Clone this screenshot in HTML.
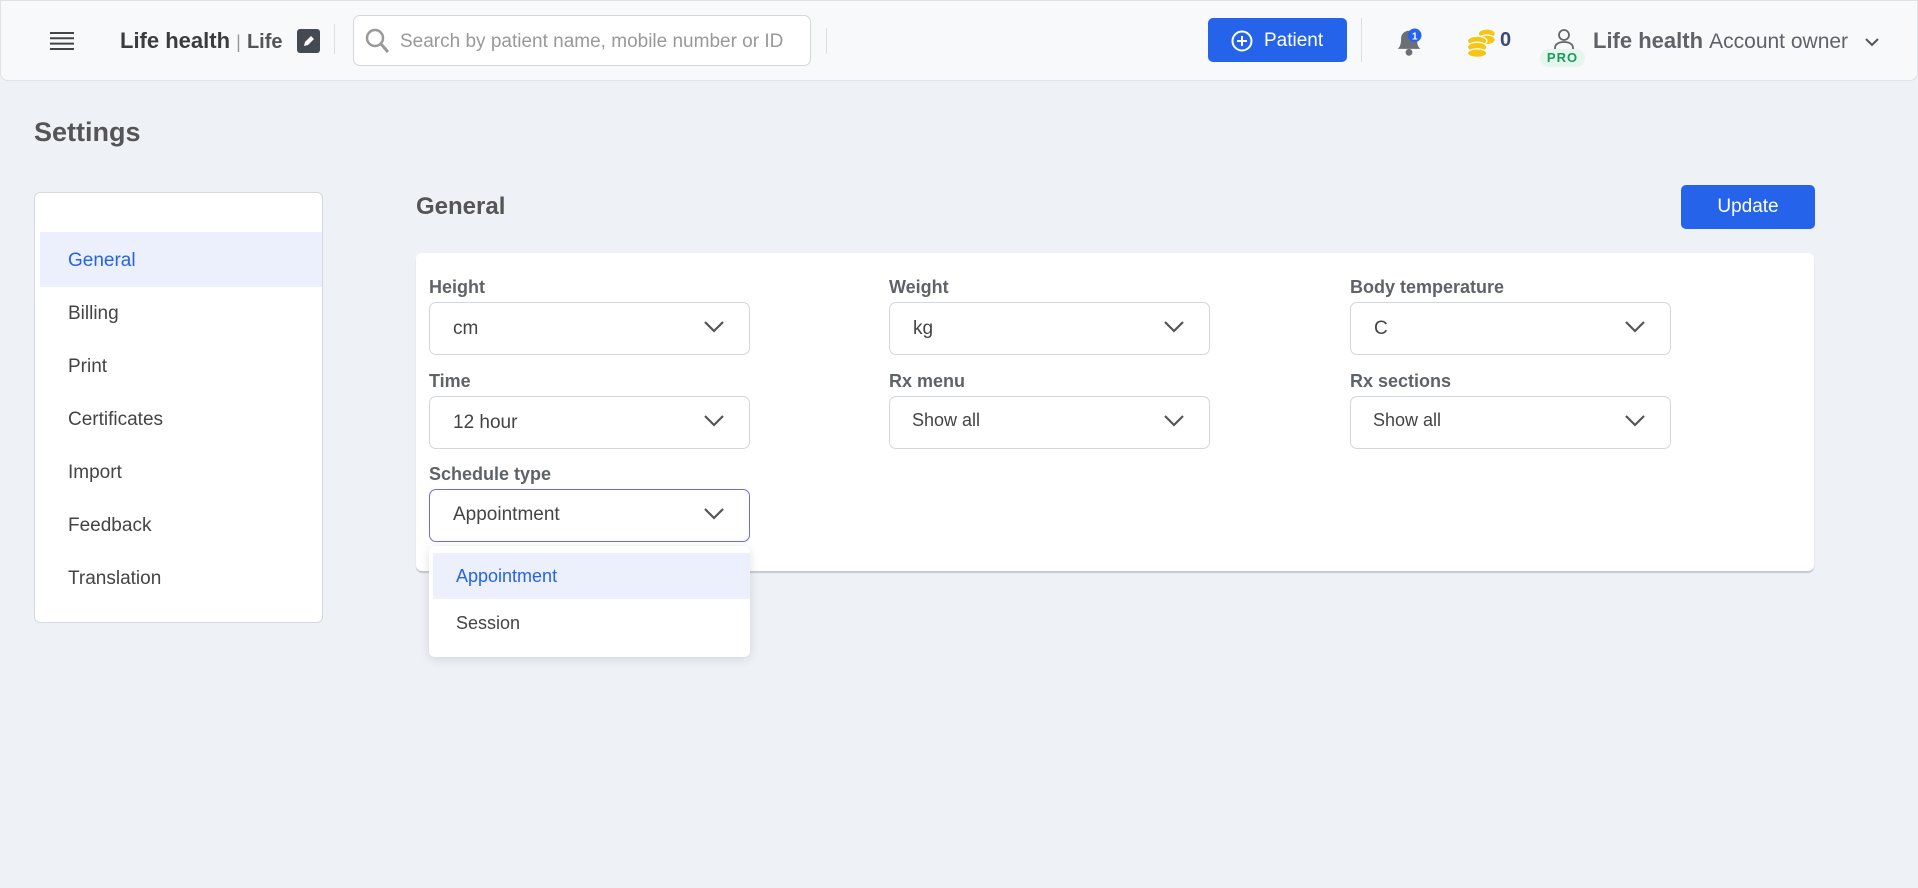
<!DOCTYPE html>
<html><head><meta charset="utf-8"><style>
*{box-sizing:border-box;margin:0;padding:0}
body{width:1918px;height:888px;background:#eef1f6;font-family:"Liberation Sans",Arial,sans-serif;position:relative;overflow:hidden;color:#444}
.abs{position:absolute}
.hdr{left:0;top:0;width:1918px;height:81px;background:#f8f9fb;border:1px solid #dfe2e7;border-radius:0 0 8px 8px}
.sel{position:absolute;width:321px;height:53px;background:#fff;border:1px solid #d3d6db;border-radius:7px;font-size:19px;color:#444;padding-left:23px;line-height:51px}
.sel svg{position:absolute;right:24px;top:17px}
.lbl{position:absolute;font-size:18px;font-weight:bold;color:#5f6368}
.nav{position:absolute;left:68px;font-size:19px;color:#444}
</style></head><body>
<div class="abs hdr"></div>
<svg class="abs" style="left:50px;top:31px" width="24" height="20" viewBox="0 0 24 20"><g stroke="#444" stroke-width="2"><line x1="0" y1="2" x2="24" y2="2"/><line x1="0" y1="7.3" x2="24" y2="7.3"/><line x1="0" y1="12.6" x2="24" y2="12.6"/><line x1="0" y1="18" x2="24" y2="18"/></g></svg>
<div class="abs" style="left:120px;top:28px;font-size:22px;font-weight:bold;color:#3c3c3c">Life health <span style="font-weight:normal;color:#999;font-size:18px">|</span> <span style="font-size:20px;color:#555">Life</span></div>
<div class="abs" style="left:297px;top:29px;width:23px;height:24px;background:#444a52;border-radius:3px"><svg width="23" height="24" viewBox="0 0 23 24"><path d="M7 17l1-4 6-6 3 3-6 6z" fill="#fff"/></svg></div>
<div class="abs" style="left:334px;top:24px;width:1px;height:30px;background:#dcdfe3"></div>
<div class="abs" style="left:353px;top:15px;width:458px;height:51px;background:#fff;border:1px solid #d3d6db;border-radius:7px"></div>
<svg class="abs" style="left:365px;top:28px" width="26" height="28" viewBox="0 0 26 28"><circle cx="10" cy="10" r="8" fill="none" stroke="#999" stroke-width="2.5"/><line x1="16" y1="16" x2="23" y2="24" stroke="#999" stroke-width="3"/></svg>
<div class="abs" style="left:400px;top:31px;font-size:19px;color:#999">Search by patient name, mobile number or ID</div>
<div class="abs" style="left:826px;top:28px;width:1px;height:26px;background:#dcdfe3"></div>
<div class="abs" style="left:1208px;top:18px;width:139px;height:44px;background:#2563eb;border-radius:5px;color:#fff;font-size:19px;line-height:46px;padding-left:56px">Patient</div>
<svg class="abs" style="left:1231px;top:30px" width="22" height="22" viewBox="0 0 22 22"><circle cx="11" cy="11" r="9.5" fill="none" stroke="#fff" stroke-width="2"/><path d="M11 6v10M6 11h10" stroke="#fff" stroke-width="2"/></svg>
<div class="abs" style="left:1361px;top:18px;width:1px;height:44px;background:#dcdfe3"></div>
<svg class="abs" style="left:1393px;top:24px" width="32" height="34" viewBox="0 0 28 30"><path d="M4 22c2-2 3-4 3-9 0-4 3-7 7-7s7 3 7 7c0 5 1 7 3 9z" fill="#6b6f76"/><circle cx="14" cy="25" r="3" fill="#6b6f76"/><circle cx="19" cy="10" r="6" fill="#2563eb"/><text x="19" y="13.5" font-size="9" fill="#fff" text-anchor="middle" font-family="Liberation Sans" font-weight="bold">1</text></svg>
<svg class="abs" style="left:1465px;top:24px" width="34" height="34" viewBox="0 0 28 28"><g fill="#f5c518" stroke="#fff" stroke-width="1"><ellipse cx="18" cy="8" rx="7" ry="4"/><ellipse cx="18" cy="13" rx="7" ry="4"/><ellipse cx="10" cy="14" rx="8" ry="4"/><ellipse cx="10" cy="19" rx="8" ry="4"/><ellipse cx="10" cy="24" rx="8" ry="3.5"/></g></svg>
<div class="abs" style="left:1500px;top:29px;font-size:20px;font-weight:bold;color:#3b4a7a">0</div>
<svg class="abs" style="left:1553px;top:28px" width="22" height="24" viewBox="0 0 22 24"><circle cx="11" cy="7" r="5" fill="none" stroke="#666" stroke-width="1.8"/><path d="M2 23v-3c0-4 4-6 9-6s9 2 9 6v3" fill="none" stroke="#666" stroke-width="1.8"/></svg>
<div class="abs" style="left:1540px;top:49px;width:45px;height:18px;background:#e5f6ee;border-radius:9px;color:#1c9a5c;font-size:13px;font-weight:bold;text-align:center;line-height:18px;letter-spacing:1px">PRO</div>
<div class="abs" style="left:1593px;top:28px;font-size:22px;color:#5f6368"><b>Life health</b> <span style="font-size:21px">Account owner</span></div>
<svg class="abs" style="left:1865px;top:37px" width="14" height="10" viewBox="0 0 14 10"><path d="M1 2l6 6 6-6" fill="none" stroke="#555" stroke-width="2"/></svg>

<div class="abs" style="left:34px;top:117px;font-size:27px;font-weight:bold;color:#555">Settings</div>
<div class="abs" style="left:34px;top:192px;width:289px;height:431px;background:#fff;border:1px solid #d6d9de;border-radius:6px"></div>
<div class="abs" style="left:40px;top:232px;width:282px;height:55px;background:#ebf0fc"></div>
<div class="nav" style="top:250px;color:#2563eb">General</div>
<div class="nav" style="top:303px">Billing</div>
<div class="nav" style="top:356px">Print</div>
<div class="nav" style="top:409px">Certificates</div>
<div class="nav" style="top:462px">Import</div>
<div class="nav" style="top:515px">Feedback</div>
<div class="nav" style="top:568px">Translation</div>

<div class="abs" style="left:416px;top:193px;font-size:24px;font-weight:bold;color:#555">General</div>
<div class="abs" style="left:1681px;top:185px;width:134px;height:44px;background:#2563eb;border-radius:5px;color:#fff;font-size:19px;text-align:center;line-height:44px">Update</div>
<div class="abs" style="left:416px;top:253px;width:1398px;height:318px;background:#fff;border-radius:6px;box-shadow:0 2px 1px #c5c8cd"></div>

<div class="lbl" style="left:429px;top:277px">Height</div>
<div class="lbl" style="left:889px;top:277px">Weight</div>
<div class="lbl" style="left:1350px;top:277px">Body temperature</div>
<div class="lbl" style="left:429px;top:371px">Time</div>
<div class="lbl" style="left:889px;top:371px">Rx menu</div>
<div class="lbl" style="left:1350px;top:371px">Rx sections</div>
<div class="lbl" style="left:429px;top:464px">Schedule type</div>

<div class="sel" style="left:429px;top:302px">cm<svg width="22" height="14" viewBox="0 0 22 14"><path d="M2 2l9 9 9-9" fill="none" stroke="#555" stroke-width="2.2"/></svg></div>
<div class="sel" style="left:889px;top:302px">kg<svg width="22" height="14" viewBox="0 0 22 14"><path d="M2 2l9 9 9-9" fill="none" stroke="#555" stroke-width="2.2"/></svg></div>
<div class="sel" style="left:1350px;top:302px">C<svg width="22" height="14" viewBox="0 0 22 14"><path d="M2 2l9 9 9-9" fill="none" stroke="#555" stroke-width="2.2"/></svg></div>
<div class="sel" style="left:429px;top:396px">12 hour<svg width="22" height="14" viewBox="0 0 22 14"><path d="M2 2l9 9 9-9" fill="none" stroke="#555" stroke-width="2.2"/></svg></div>
<div class="sel" style="left:889px;top:396px;font-size:18px;padding-left:22px;line-height:47px">Show all<svg width="22" height="14" viewBox="0 0 22 14"><path d="M2 2l9 9 9-9" fill="none" stroke="#555" stroke-width="2.2"/></svg></div>
<div class="sel" style="left:1350px;top:396px;font-size:18px;padding-left:22px;line-height:47px">Show all<svg width="22" height="14" viewBox="0 0 22 14"><path d="M2 2l9 9 9-9" fill="none" stroke="#555" stroke-width="2.2"/></svg></div>
<div class="sel" style="left:429px;top:489px;border-color:#6b6cf0;line-height:49px">Appointment<svg width="22" height="14" viewBox="0 0 22 14"><path d="M2 2l9 9 9-9" fill="none" stroke="#555" stroke-width="2.2"/></svg></div>

<div class="abs" style="left:429px;top:546px;width:321px;height:111px;background:#fff;border-radius:6px;box-shadow:0 2px 10px rgba(0,0,0,0.12)"></div>
<div class="abs" style="left:433px;top:553px;width:317px;height:46px;background:#ebf0fc"></div>
<div class="abs" style="left:456px;top:566px;font-size:18px;color:#2563eb">Appointment</div>
<div class="abs" style="left:456px;top:613px;font-size:18px;color:#444">Session</div>
</body></html>
